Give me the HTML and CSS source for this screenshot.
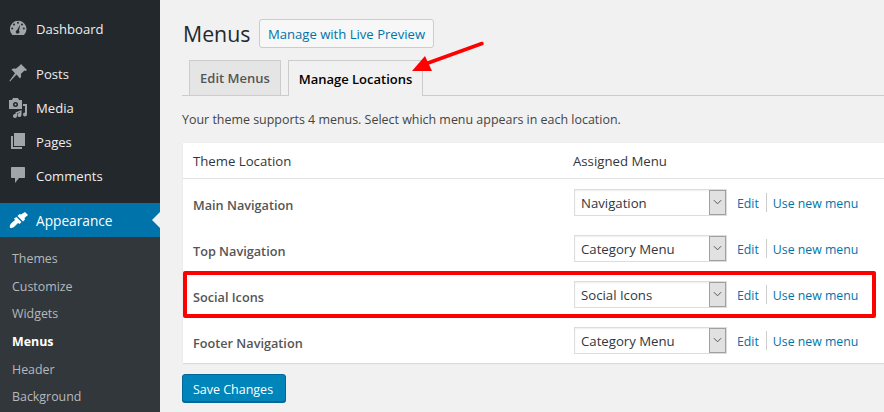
FILE: index.html
```html
<!DOCTYPE html>
<html lang="en">
<head>
<meta charset="utf-8">
<title>Menus</title>
<link rel="stylesheet" href="styles.css">
</head>
<body>
<div class="app">
  <nav class="sidebar">
    <ul class="menu group-first">
      <li class="item"><svg class="ico" viewBox="0 0 20 20"><path fill-rule="evenodd" d="M3.400 16A8.300 8.300 0 1 1 15 16zM9 2.800a1 1 0 1 0 0 2 1 1 0 0 0 0-2zM5 4.500a1 1 0 1 0 0 2 1 1 0 0 0 0-2zM13 4.500a1 1 0 1 0 0 2 1 1 0 0 0 0-2zM3.200 8.500a1 1 0 1 0 0 2 1 1 0 0 0 0-2zM14.800 8.500a1 1 0 1 0 0 2 1 1 0 0 0 0-2zM11.200 5.500L8 11.200a1.800 1.800 0 1 0 2 .5z"/></svg>Dashboard</li>
    </ul>
    <ul class="menu group-main">
      <li class="item"><svg class="ico" viewBox="0 0 20 20"><path d="M12 0l6 6-1.500 1-1-.5-3.700 3.500c.7 1.800.4 3.400-.8 4.500L7.500 10.500 1 17.500l-.7-.5 5.700-7.700-3.500-3.800c1.100-1.100 2.700-1.400 4.300-.8L10.800 1.500z"/></svg>Posts</li>
      <li class="item"><svg class="ico" viewBox="0 0 20 20"><path fill-rule="evenodd" d="M0 2h3L4 0h5l1 2h3v9H0zm6.500 2a2.500 2.500 0 1 0 0 5 2.500 2.500 0 0 0 0-5zm0 1.500a1 1 0 1 1 0 2 1 1 0 0 1 0-2zM14 6h4v10.500a2 2 0 1 1-2-2V8h-2zM6.500 14.500l6-2.500v5a2 2 0 1 1-1.500-2v-.8l-3 1.200v2.600a2 2 0 1 1-1.500-2z"/></svg>Media</li>
      <li class="item"><svg class="ico" viewBox="0 0 20 20"><path d="M5 1h11v13H5zM2 4h2v11h9v2H2z"/></svg>Pages</li>
      <li class="item"><svg class="ico" viewBox="0 0 20 20"><path d="M3 1h12c.6 0 1 .4 1 1v9c0 .6-.4 1-1 1h-5l-4 5v-5H3c-.6 0-1-.4-1-1V2c0-.6.4-1 1-1z"/></svg>Comments</li>
    </ul>
    <ul class="menu group-active">
      <li class="item active"><svg class="ico" viewBox="0 0 20 20"><path d="M16 2l3 3-3.500 3 .5 1.500-2 2L8.500 6l2-2 1.500.5zM7.500 7l5 5-2 2-1.500-1-3.500 3.500c-1 1-3 1.500-4.500 1.500-.5-1.500 0-3.500 1-4.500L6 10 5 8.500z"/></svg><span class="active-label">Appearance</span><span class="pointer"></span></li>
    </ul>
    <ul class="submenu">
      <li>Themes</li>
      <li>Customize</li>
      <li>Widgets</li>
      <li class="current">Menus</li>
      <li>Header</li>
      <li>Background</li>
    </ul>
  </nav>

  <main class="content">
    <header class="title-row">
      <h1>Menus</h1>
      <a class="outline-btn">Manage with Live Preview</a>
    </header>
    <div class="tabs">
      <a class="tab">Edit Menus</a>
      <a class="tab tab-active">Manage Locations</a>
    </div>
    <p class="intro">Your theme supports 4 menus. Select which menu appears in each location.</p>

    <section class="table">
      <div class="row head"><span>Theme Location</span><span>Assigned Menu</span></div>
      <div class="row"><strong>Main Navigation</strong><div class="assign"><div class="select"><span class="value">Navigation</span><span class="arrow"><svg viewBox="0 0 10 6"><path d="M1 1l4 4 4-4"/></svg></span></div><a>Edit</a><i></i><a>Use new menu</a></div></div>
      <div class="row"><strong>Top Navigation</strong><div class="assign"><div class="select"><span class="value">Category Menu</span><span class="arrow"><svg viewBox="0 0 10 6"><path d="M1 1l4 4 4-4"/></svg></span></div><a>Edit</a><i></i><a>Use new menu</a></div></div>
      <div class="row"><strong>Social Icons</strong><div class="assign"><div class="select"><span class="value">Social Icons</span><span class="arrow"><svg viewBox="0 0 10 6"><path d="M1 1l4 4 4-4"/></svg></span></div><a>Edit</a><i></i><a>Use new menu</a></div></div>
      <div class="row"><strong>Footer Navigation</strong><div class="assign"><div class="select"><span class="value">Category Menu</span><span class="arrow"><svg viewBox="0 0 10 6"><path d="M1 1l4 4 4-4"/></svg></span></div><a>Edit</a><i></i><a>Use new menu</a></div></div>
    </section>
    <button class="primary">Save Changes</button>
  </main>

  <div class="highlight"></div>
  <svg class="callout" viewBox="0 0 80 40"><path d="M70 3.500L16 23" stroke="#f00" stroke-width="3.500" stroke-linecap="round" fill="none"/><path d="M0 31L13 16l7 15z" fill="#f00"/></svg>
</div>
</body>
</html>
```
FILE: styles.css
```css
* { box-sizing: border-box; }
html, body { margin: 0; height: 100%; overflow: hidden; }
body { background: #f1f1f1; font-family: "Open Sans", "Noto Sans", sans-serif; font-size: 13px; color: #444; }
ul { list-style: none; margin: 0; padding: 0; }
.app { position: relative; display: flex; width: 884px; height: 412px; overflow: hidden; }

.sidebar { flex: 0 0 160px; background: #23282d; color: #eee; padding-top: 12px; }
.menu { display: flex; flex-direction: column; }
.group-main { margin-top: 11px; }
.group-active { margin-top: 10px; }
.item { position: relative; display: flex; align-items: center; height: 34px; padding-left: 36px; font-size: 13.100px; }
.ico { position: absolute; left: 9px; top: 7px; width: 20px; height: 20px; fill: #a0a5aa; }
.active { background: #0073aa; color: #fff; padding-top: 1px; font-size: 13.700px; }
.active .ico { fill: #fff; }
.pointer { position: absolute; right: 0; top: 9px; border: 8px solid transparent; border-right-color: #f1f1f1; border-left-width: 0; }
.submenu { background: #32373c; padding-top: 8px; height: 175px; }
.submenu li { height: 27.700px; padding-left: 12px; line-height: 27.700px; font-size: 12.400px; color: #b4b9be; }
.submenu .current { color: #fff; font-weight: 700; }

.content { flex: 1; min-width: 0; padding: 19px 0 0 22px; }
.title-row { display: flex; align-items: center; height: 29px; margin-left: 1px; }
h1 { width: 68px; margin: 0 8px 0 0; font-size: 21.300px; font-weight: 400; color: #23282d; line-height: 29px; }
.outline-btn { display: flex; align-items: center; justify-content: center; width: 175px; height: 29px; border: 1px solid #ccc; border-radius: 3px; background: #f7f7f7; color: #0073aa; font-size: 13.100px; font-weight: 500; }

.tabs { display: flex; gap: 7px; height: 36px; margin-top: 12px; padding-left: 7px; border-bottom: 1px solid #ccc; }
.tab { display: flex; align-items: center; justify-content: center; width: 92px; height: 35px; border: 1px solid #ccc; border-bottom: 0; background: #e5e5e5; color: #555; font-size: 13px; font-weight: 600; }
.tab-active { width: 135px; height: 36px; background: #f1f1f1; color: #000; }

.intro { margin: 15px 0 0; font-size: 12.450px; line-height: 18px; color: #444; }

.table { width: 720px; margin: 14px 0 0 1px; background: #fff; box-shadow: 0 1px 1px rgba(0,0,0,.08), 0 0 1px rgba(0,0,0,.08); }
.row { display: grid; grid-template-columns: 380px 1fr; align-items: center; height: 46px; padding-left: 10px; }
.head { height: 36px; border-bottom: 1px solid #e1e1e1; font-size: 13.200px; color: #32373c; }
.row strong { padding-top: 6px; font-size: 12.700px; font-weight: 600; color: #555; }
.assign { display: flex; align-items: center; margin-left: 1px; font-size: 12.300px; }
.select { display: flex; width: 153px; height: 27px; margin-right: 10px; border: 1px solid #ddd; box-shadow: inset 0 1px 2px rgba(0,0,0,.07); background: #fff; }
.value { flex: 1; padding-left: 6px; line-height: 27px; font-size: 13.200px; color: #32373c; }
.arrow { display: flex; align-items: center; justify-content: center; width: 17px; margin: 0; border: 1px solid #a0a0a0; background: #e1e1e1; }
.arrow svg { width: 9px; height: 6px; fill: none; stroke: #444; stroke-width: 1; }
.assign a { padding-top: 2px; color: #0073aa; }
.assign i { width: 1px; height: 19px; margin: 0 6px 0 7px; background: #ccc; }

.primary { display: block; width: 104px; height: 28px; margin-top: 11px; padding: 2px 2px 0 0; border: 1px solid #006799; border-radius: 3px; background: #0085ba; box-shadow: 0 1px 0 #006799; color: #fff; font: 12.500px "Open Sans", "Noto Sans", sans-serif; }

.highlight { position: absolute; left: 183px; top: 271px; width: 693px; height: 47px; border: 4px solid #f00; border-radius: 2px; }
.callout { position: absolute; left: 412px; top: 40px; width: 80px; height: 40px; }
```
